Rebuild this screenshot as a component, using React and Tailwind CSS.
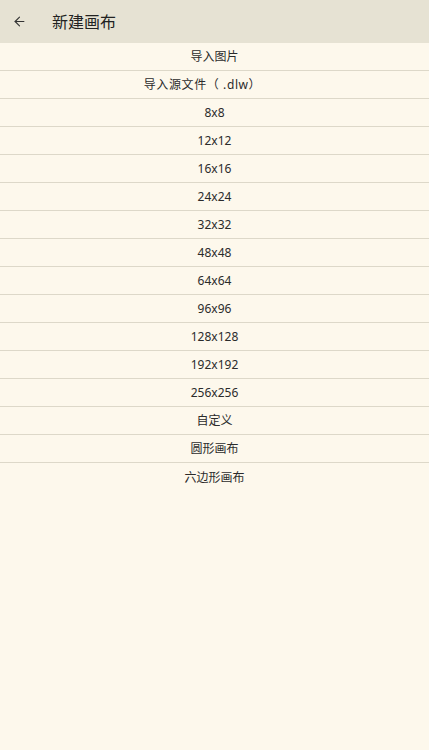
import { ArrowLeft } from "lucide-react";

const items = [
  "导入图片",
  "导入源文件（ .dlw）",
  "8x8",
  "12x12",
  "16x16",
  "24x24",
  "32x32",
  "48x48",
  "64x64",
  "96x96",
  "128x128",
  "192x192",
  "256x256",
  "自定义",
  "圆形画布",
  "六边形画布",
];

export default function App() {
  return (
    <div
      className="min-h-[750px] bg-[#fdf8ec] text-[#2b2b2b]"
      style={{ fontFamily: '"Noto Sans", "Noto Sans CJK SC", sans-serif' }}
    >
      <header className="h-[43px] bg-[#e6e2d3] flex items-center pl-[12px]">
        <ArrowLeft size={15} strokeWidth={1.8} className="text-[#333]" />
        <h1 className="ml-[25px] text-[16px] text-[#222]">新建画布</h1>
      </header>
      <ul className="divide-y divide-[#ddd8c9]">
        {items.map((it, i) => (
          <li
            key={it}
            className={
              i === 1
                ? "h-[28px] pt-[1px] pr-[24px] flex items-center justify-center text-[12px] tracking-[0.6px]"
                : "h-[28px] pt-[1px] flex items-center justify-center text-[12px]"
            }
          >
            {it}
          </li>
        ))}
      </ul>
    </div>
  );
}
